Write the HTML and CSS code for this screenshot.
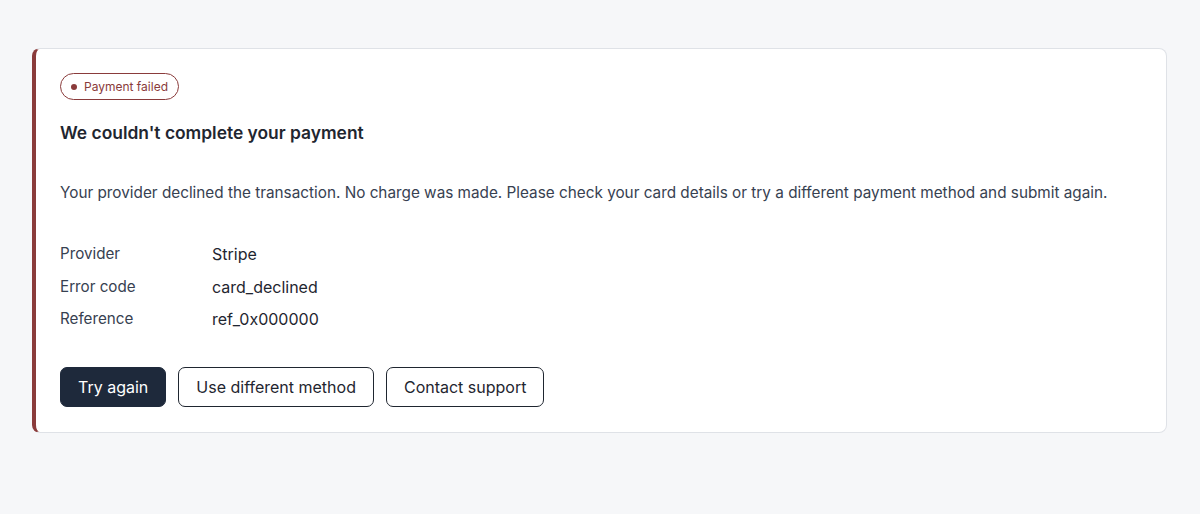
FILE: index.html
```html
<!DOCTYPE html>
<html lang="en">
<head>
    <meta charset="UTF-8">
    <meta name="viewport" content="width=device-width, initial-scale=1.0">
    <title>Payment failed</title>
    <link rel="stylesheet" href="styles.css">
</head>
<body>
    <section class="alert-card">
        <span class="status-badge"><span class="dot"></span>Payment failed</span>
        <h2 class="alert-title">We couldn't complete your payment</h2>
        <p class="alert-text">Your provider declined the transaction. No charge was made. Please check your card details or try a different payment method and submit again.</p>

        <dl class="details">
            <dt>Provider</dt>
            <dd>Stripe</dd>
            <dt>Error code</dt>
            <dd>card_declined</dd>
            <dt>Reference</dt>
            <dd>ref_0x000000</dd>
        </dl>

        <div class="actions">
            <button class="btn btn-primary">Try again</button>
            <button class="btn">Use different method</button>
            <button class="btn">Contact support</button>
        </div>
    </section>
</body>
</html>
```

FILE: styles.css
```css
* {
    margin: 0;
    padding: 0;
    box-sizing: border-box;
}

:root {
    --danger: #8a3b3b;
    --dark: #1e293b;
    --text: #374151;
    --border: #dfe2e7;
}

body {
    background: #f6f7f9;
    font-family: Inter, 'Liberation Sans', sans-serif;
    color: var(--dark);
    padding: 48px 33px 48px 32px;
}

.alert-card {
    background: white;
    border: 1px solid var(--border);
    border-left: 4px solid var(--danger);
    border-radius: 8px;
    padding: 24px 24px 25px 24px;
}

.status-badge {
    display: inline-flex;
    align-items: center;
    gap: 7px;
    font-size: 12px;
    line-height: 17px;
    padding: 4px 10px 4px 10px;
    border: 1px solid var(--danger);
    border-radius: 14px;
    color: var(--danger);
}

.status-badge .dot {
    width: 6px;
    height: 6px;
    border-radius: 50%;
    background: var(--danger);
}

.alert-title {
    font-size: 17.4px;
    font-weight: 600;
    line-height: 24px;
    margin-top: 21px;
    color: #1f2630;
}

.alert-text {
    font-size: 15.3px;
    line-height: 22px;
    color: var(--text);
    margin-top: 37px;
}

.details {
    display: grid;
    grid-template-columns: 152px 1fr;
    row-gap: 10.5px;
    margin-top: 39px;
    font-size: 15.2px;
    line-height: 22px;
}

.details dt {
    color: var(--text);
}

.details dd {
    color: #1f2630;
    font-size: 16px;
    line-height: 22px;
}

.actions {
    display: flex;
    gap: 12px;
    margin-top: 37px;
}

.btn {
    font-family: inherit;
    font-size: 16px;
    height: 40px;
    padding: 0 17px;
    background: white;
    color: #1f2630;
    border: 1px solid #1f2630;
    border-radius: 7px;
    cursor: pointer;
}

.btn-primary {
    background: var(--dark);
    border-color: var(--dark);
    color: white;
}
```
